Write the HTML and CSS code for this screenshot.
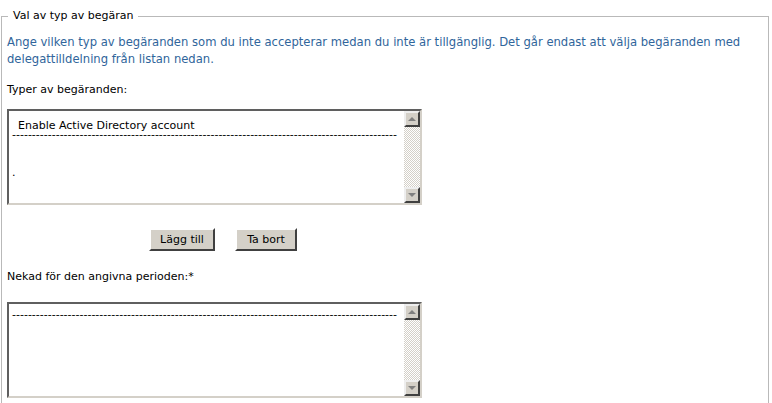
FILE: index.html
```html
<!DOCTYPE html>
<html lang="sv">
<head>
<meta charset="utf-8">
<title>Val av typ av begäran</title>
<link rel="stylesheet" href="styles.css">
</head>
<body>
<fieldset class="group">
  <legend class="group-title">Val av typ av begäran</legend>
  <p class="intro">Ange vilken typ av begäranden som du inte accepterar medan du inte är tillgänglig. Det går endast att välja begäranden med delegattilldelning från listan nedan.</p>
  <div class="label">Typer av begäranden:</div>
  <div class="listbox">
    <div class="list-items">
      <div class="item item-first">Enable Active Directory account</div>
      <div class="item dashes">-------------------------------------------------------------------------------------------------</div>
      <div class="item dot">.</div>
    </div>
    <div class="scrollbar">
      <div class="sb-btn"><span class="arrow-up"></span></div>
      <div class="sb-track"></div>
      <div class="sb-btn"><span class="arrow-down"></span></div>
    </div>
  </div>
  <div class="buttons">
    <button class="btn btn-add" type="button">Lägg till</button>
    <button class="btn btn-remove" type="button">Ta bort</button>
  </div>
  <div class="label label-second">Nekad för den angivna perioden:*</div>
  <div class="listbox listbox-second">
    <div class="list-items list-items-second">
      <div class="item dashes">-------------------------------------------------------------------------------------------------</div>
    </div>
    <div class="scrollbar">
      <div class="sb-btn"><span class="arrow-up"></span></div>
      <div class="sb-track"></div>
      <div class="sb-btn"><span class="arrow-down"></span></div>
    </div>
  </div>
</fieldset>
</body>
</html>
```
FILE: styles.css
```css
html, body {
  margin: 0;
  padding: 0;
  background: #ffffff;
}
body {
  font-family: "DejaVu Sans", Verdana, sans-serif;
  font-size: 11px;
  color: #000000;
  overflow: hidden;
  height: 403px;
}
.group {
  margin: 9px 3px 0 1px;
  padding: 0 5px 20px 5px;
  border: 1px solid #b9b9b9;
  min-height: 420px;
}
.group-title {
  margin-left: 1px;
  padding: 0 5px;
  font-size: 11px;
  line-height: 14px;
}
.intro {
  margin: 11px 0 0 0;
  color: #30659b;
  font-size: 11.6px;
  line-height: 17px;
}
.label {
  margin-top: 15px;
  line-height: 14px;
}
.label-second {
  margin-top: 19px;
}
.listbox {
  display: flex;
  width: 411px;
  height: 92px;
  margin-top: 12px;
  border: 2px solid;
  border-color: #5f5f5f #d4d0c8 #d4d0c8 #5f5f5f;
  background: #ffffff;
}
.listbox-second {
  margin-top: 18px;
}
.list-items {
  flex: 1;
  overflow: hidden;
  padding: 8px 0 0 3px;
}
.list-items-second {
  padding-top: 7px;
}
.item {
  white-space: nowrap;
  line-height: 13px;
}
.item-first {
  padding-left: 6px;
  line-height: 11px;
  padding-top: 1px;
}
.dashes {
  height: 10px;
  line-height: 10px;
  margin-top: -1px;
}
.dot {
  margin-top: 26px;
}
.scrollbar {
  width: 16px;
  display: flex;
  flex-direction: column;
}
.sb-btn {
  width: 12px;
  height: 12px;
  background: #d4d0c8;
  border: 2px solid;
  border-color: #eeeeee #404040 #404040 #eeeeee;
  display: flex;
  align-items: center;
  justify-content: center;
}
.sb-track {
  flex: 1;
  background-color: #ffffff;
  background-image: repeating-conic-gradient(#d4d0c8 0 25%, #ffffff 0 50%);
  background-size: 2px 2px;
}
.arrow-up {
  width: 0;
  height: 0;
  border-left: 4px solid transparent;
  border-right: 4px solid transparent;
  border-bottom: 4px solid #808080;
}
.arrow-down {
  width: 0;
  height: 0;
  border-left: 4px solid transparent;
  border-right: 4px solid transparent;
  border-top: 4px solid #808080;
}
.buttons {
  display: flex;
  gap: 20px;
  margin: 23px 0 0 142px;
}
.btn {
  font-family: "DejaVu Sans", Verdana, sans-serif;
  font-size: 11px;
  height: 23px;
  margin: 0;
  padding: 0;
  background: #d4d0c8;
  border: 2px solid;
  border-color: #ffffff #404040 #404040 #ffffff;
  color: #000000;
}
.btn-add {
  width: 66px;
}
.btn-remove {
  width: 62px;
}
```
